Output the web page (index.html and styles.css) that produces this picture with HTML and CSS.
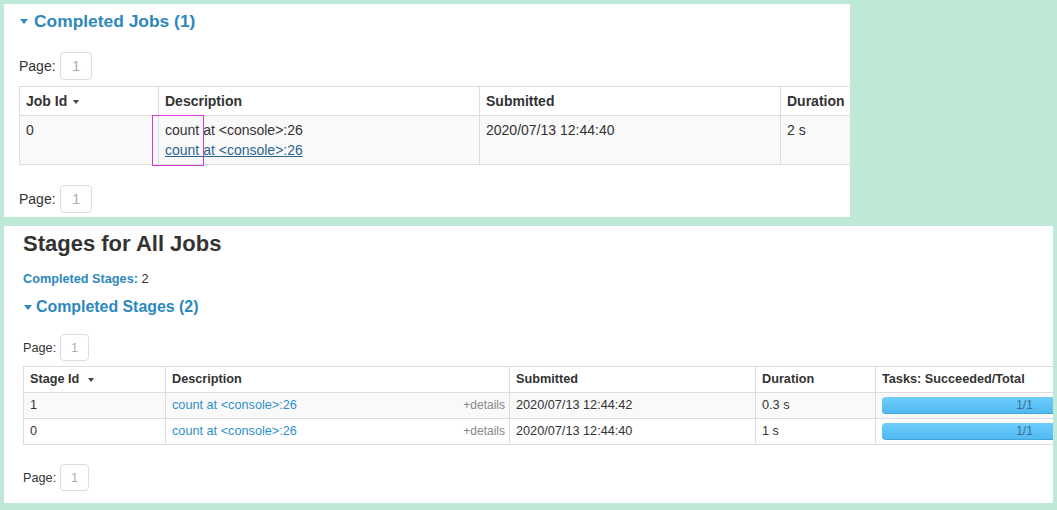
FILE: index.html
```html
<!DOCTYPE html>
<html>
<head>
<meta charset="utf-8">
<link rel="stylesheet" href="styles.css">
</head>
<body>
<div class="panel jobs">
  <h4 class="section-title"><span class="caret"></span>Completed Jobs (1)</h4>
  <div class="pager"><span>Page:</span><span class="page-box">1</span></div>
  <table class="grid">
    <colgroup><col class="c-jobid"><col class="c-jobdesc"><col class="c-jobsub"><col class="c-jobdur"></colgroup>
    <thead>
      <tr><th>Job Id <span class="sort"></span></th><th>Description</th><th>Submitted</th><th>Duration</th></tr>
    </thead>
    <tbody>
      <tr class="odd"><td>0</td><td>count at &lt;console&gt;:26<br><a class="job-link" href="#">count at &lt;console&gt;:26</a></td><td>2020/07/13 12:44:40</td><td>2 s</td></tr>
    </tbody>
  </table>
  <div class="pager bottom"><span>Page:</span><span class="page-box">1</span></div>
  <div class="highlight"></div>
</div>
<div class="panel stages">
  <h3 class="page-title">Stages for All Jobs</h3>
  <div class="summary"><a href="#" class="summary-link">Completed Stages:</a> 2</div>
  <h4 class="section-title"><span class="caret"></span>Completed Stages (2)</h4>
  <div class="pager"><span>Page:</span><span class="page-box">1</span></div>
  <table class="grid">
    <colgroup><col class="c-stid"><col class="c-stdesc"><col class="c-stsub"><col class="c-stdur"><col class="c-sttask"></colgroup>
    <thead>
      <tr><th>Stage Id <span class="sort"></span></th><th>Description</th><th>Submitted</th><th>Duration</th><th>Tasks: Succeeded/Total</th></tr>
    </thead>
    <tbody>
      <tr class="odd"><td>1</td><td><div class="desc"><a href="#" class="stage-link">count at &lt;console&gt;:26</a><span class="details">+details</span></div></td><td>2020/07/13 12:44:42</td><td>0.3 s</td><td><div class="progress"><span>1/1</span></div></td></tr>
      <tr><td>0</td><td><div class="desc"><a href="#" class="stage-link">count at &lt;console&gt;:26</a><span class="details">+details</span></div></td><td>2020/07/13 12:44:40</td><td>1 s</td><td><div class="progress"><span>1/1</span></div></td></tr>
    </tbody>
  </table>
  <div class="pager bottom"><span>Page:</span><span class="page-box">1</span></div>
</div>
</body>
</html>
```
FILE: styles.css
```css
html, body {
  margin: 0;
  padding: 0;
}
body {
  background: #bde9d6;
  font-family: "Liberation Sans", Arial, sans-serif;
  color: #333;
  width: 1057px;
  height: 510px;
  overflow: hidden;
  padding-top: 4px;
  box-sizing: border-box;
}
.panel {
  background: #fff;
  margin-left: 4px;
  position: relative;
  overflow: hidden;
  box-sizing: border-box;
}
.jobs {
  width: 846px;
  height: 213px;
  padding: 7px 0 0 15px;
  font-size: 14px;
}
.stages {
  width: 1049px;
  height: 277px;
  margin-top: 9px;
  padding: 5px 0 0 19px;
  font-size: 12.7px;
}
.section-title {
  margin: 0;
  font-weight: bold;
  color: #2c88bd;
  display: flex;
  align-items: center;
}
.jobs .section-title {
  font-size: 17.4px;
  line-height: 20px;
}
.stages .section-title {
  font-size: 15.9px;
  line-height: 20px;
  margin-top: 9px;
}
.caret {
  width: 0;
  height: 0;
  border-left: 4px solid transparent;
  border-right: 4px solid transparent;
  border-top: 5px solid #2c88bd;
  margin: 1px 6px 0 1px;
}
.stages .caret {
  margin: 1px 4px 0 1px;
}
.page-title {
  margin: 0;
  font-size: 22px;
  line-height: 26px;
  font-weight: bold;
  color: #333;
}
.summary {
  margin-top: 13px;
  line-height: 18px;
  font-size: 12.7px;
}
.summary-link {
  color: #2c88bd;
  font-weight: bold;
  text-decoration: none;
}
.pager {
  display: flex;
  align-items: center;
  color: #333;
}
.jobs .pager {
  margin-top: 21px;
}
.jobs .pager.bottom {
  margin-top: 20px;
}
.stages .pager {
  margin-top: 17px;
}
.stages .pager.bottom {
  margin-top: 19px;
}
.page-box {
  margin-left: 4px;
  border: 1px solid #ddd;
  border-radius: 4px;
  color: #aaa;
  display: flex;
  align-items: center;
  justify-content: center;
  box-sizing: border-box;
}
.jobs .page-box {
  width: 32px;
  height: 28px;
  margin-left: 4.5px;
}
.stages .page-box {
  width: 29px;
  height: 27px;
  margin-left: 4px;
  font-size: 12px;
}
.grid {
  border-collapse: collapse;
  table-layout: fixed;
  margin-top: 6px;
}
.jobs .grid {
  width: 961px;
}
.stages .grid {
  width: 1150px;
  margin-top: 5px;
}
.c-jobid { width: 139px; }
.c-jobdesc { width: 321px; }
.c-jobsub { width: 301px; }
.c-jobdur { width: 200px; }
.c-stid { width: 142px; }
.c-stdesc { width: 344px; }
.c-stsub { width: 246px; }
.c-stdur { width: 120px; }
.c-sttask { width: 298px; }
.grid th, .grid td {
  border: 1px solid #ddd;
  text-align: left;
  vertical-align: top;
  padding: 4px 6px;
  white-space: nowrap;
  overflow: hidden;
}
.jobs .grid th, .jobs .grid td {
  line-height: 20px;
}
.stages .grid th, .stages .grid td {
  line-height: 17px;
}
.grid th {
  font-weight: bold;
  color: #333;
}
.grid tr.odd td {
  background: #f9f9f9;
}
.sort {
  display: inline-block;
  width: 0;
  height: 0;
  border-left: 3px solid transparent;
  border-right: 3px solid transparent;
  border-top: 4px solid #444;
  vertical-align: middle;
  margin-left: 2px;
}
.stages .sort {
  margin-left: 5px;
}
.job-link {
  color: #29668f;
  text-decoration: underline;
}
.desc {
  display: flex;
  justify-content: space-between;
  align-items: baseline;
}
.stage-link {
  color: #2f8fcc;
  text-decoration: none;
}
.details {
  color: #888;
  font-size: 12px;
  margin-right: -2px;
}
.progress {
  position: relative;
  height: 17px;
  border-radius: 4px;
  background: linear-gradient(#6fcdfc, #4db8f0);
  box-shadow: inset 0 -1px 0 rgba(0, 0, 0, 0.1);
}
.progress span {
  position: absolute;
  left: 0;
  right: 0;
  top: 0;
  text-align: center;
  color: #3f6d8e;
  font-size: 12px;
  line-height: 17px;
}
.highlight {
  position: absolute;
  left: 148px;
  top: 111px;
  width: 52px;
  height: 51px;
  outline: 1px solid #d63ad6;
  outline-offset: -1px;
}
```
